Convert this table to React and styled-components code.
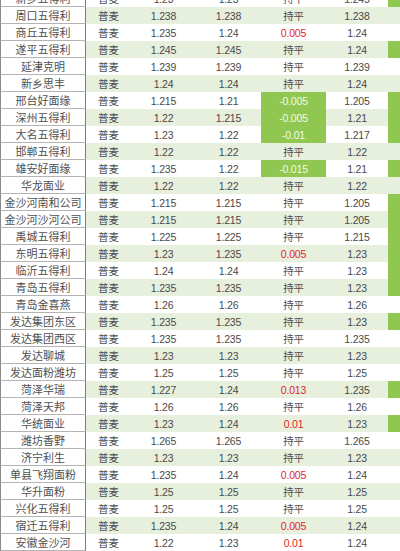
import React from 'react';
import styled, { createGlobalStyle } from 'styled-components';

const GlobalStyle = createGlobalStyle`
  html, body {
    margin: 0;
    padding: 0;
    background: #ffffff;
    overflow: hidden;
  }
  * { box-sizing: border-box; }
`;

// name, prev, now, change, next, green edge on the right
const rows = [
  ['新乡五得利', '1.23', '1.23', '持平', '1.245', true],
  ['周口五得利', '1.238', '1.238', '持平', '1.238', false],
  ['商丘五得利', '1.235', '1.24', '0.005', '1.24', false],
  ['遂平五得利', '1.245', '1.245', '持平', '1.24', true],
  ['延津克明', '1.239', '1.239', '持平', '1.239', false],
  ['新乡思丰', '1.24', '1.24', '持平', '1.24', false],
  ['邢台好面缘', '1.215', '1.21', '-0.005', '1.205', true],
  ['深州五得利', '1.22', '1.215', '-0.005', '1.21', true],
  ['大名五得利', '1.23', '1.22', '-0.01', '1.217', true],
  ['邯郸五得利', '1.22', '1.22', '持平', '1.22', false],
  ['雄安好面缘', '1.235', '1.22', '-0.015', '1.21', true],
  ['华龙面业', '1.22', '1.22', '持平', '1.22', false],
  ['金沙河南和公司', '1.215', '1.215', '持平', '1.205', true],
  ['金沙河沙河公司', '1.215', '1.215', '持平', '1.205', true],
  ['禹城五得利', '1.225', '1.225', '持平', '1.215', true],
  ['东明五得利', '1.23', '1.235', '0.005', '1.23', true],
  ['临沂五得利', '1.24', '1.24', '持平', '1.23', true],
  ['青岛五得利', '1.235', '1.235', '持平', '1.23', true],
  ['青岛金喜燕', '1.26', '1.26', '持平', '1.26', false],
  ['发达集团东区', '1.235', '1.235', '持平', '1.23', true],
  ['发达集团西区', '1.235', '1.235', '持平', '1.235', false],
  ['发达聊城', '1.23', '1.23', '持平', '1.23', false],
  ['发达面粉潍坊', '1.25', '1.25', '持平', '1.25', false],
  ['菏泽华瑞', '1.227', '1.24', '0.013', '1.235', true],
  ['菏泽天邦', '1.26', '1.26', '持平', '1.26', false],
  ['华统面业', '1.23', '1.24', '0.01', '1.23', true],
  ['潍坊香野', '1.265', '1.265', '持平', '1.265', false],
  ['济宁利生', '1.23', '1.23', '持平', '1.23', false],
  ['单县飞翔面粉', '1.235', '1.24', '0.005', '1.24', false],
  ['华升面粉', '1.25', '1.25', '持平', '1.25', false],
  ['兴化五得利', '1.25', '1.25', '持平', '1.25', false],
  ['宿迁五得利', '1.235', '1.24', '0.005', '1.24', false],
  ['安徽金沙河', '1.22', '1.23', '0.01', '1.24', false],
];

const Table = styled.div`
  margin-top: -10px;
  width: 400px;
  display: flex;
  flex-direction: column;
`;

const Row = styled.div`
  display: grid;
  grid-template-columns: 86px 45px 65px 65px 65px 62px 12px;
  height: 17px;
  background: ${p => (p.$striped ? '#e7efdd' : '#ffffff')};
  color: #4a4a4a;
`;

const NameCell = styled.div`
  background: #ffffff;
  border-left: 1px solid #8a8a8a;
  border-right: 1px solid #7a7a7a;
  border-bottom: 1px solid #b4b4b4;
  display: flex;
  align-items: center;
  justify-content: center;
  font-family: "Noto Sans CJK SC", "Liberation Sans", sans-serif;
  font-size: 11px;
  color: #505050;
  white-space: nowrap;
  overflow: hidden;
`;

const TextCell = styled.div`
  display: flex;
  align-items: center;
  justify-content: center;
  font-family: "Noto Sans CJK SC", "Liberation Sans", sans-serif;
  font-size: 10.5px;
  color: #505050;
`;

const NumCell = styled.div`
  display: flex;
  align-items: center;
  justify-content: center;
  font-family: "Liberation Sans", Arial, sans-serif;
  font-size: 10.5px;
  letter-spacing: -0.2px;
`;

const ChangeCell = styled(NumCell)`
  background: ${p => (p.$down ? '#8fc750' : 'transparent')};
  color: ${p => (p.$down ? '#f4fbe9' : p.$up ? '#e0262b' : '#505050')};
  font-family: ${p =>
    p.$flat ? '"Noto Sans CJK SC", "Liberation Sans", sans-serif' : '"Liberation Sans", Arial, sans-serif'};
`;

const EdgeCell = styled.div`
  background: ${p => (p.$green ? '#8fc750' : 'transparent')};
`;

export default function App() {
  return (
    <>
      <GlobalStyle />
      <Table>
        {rows.map(([name, prev, now, change, next, green], i) => {
          const flat = change === '持平';
          const down = change.startsWith('-');
          return (
            <Row key={name} $striped={i % 2 === 1}>
              <NameCell>{name}</NameCell>
              <TextCell>普麦</TextCell>
              <NumCell>{prev}</NumCell>
              <NumCell>{now}</NumCell>
              <ChangeCell $flat={flat} $down={down} $up={!flat && !down}>
                {change}
              </ChangeCell>
              <NumCell>{next}</NumCell>
              <EdgeCell $green={green} />
            </Row>
          );
        })}
      </Table>
    </>
  );
}
